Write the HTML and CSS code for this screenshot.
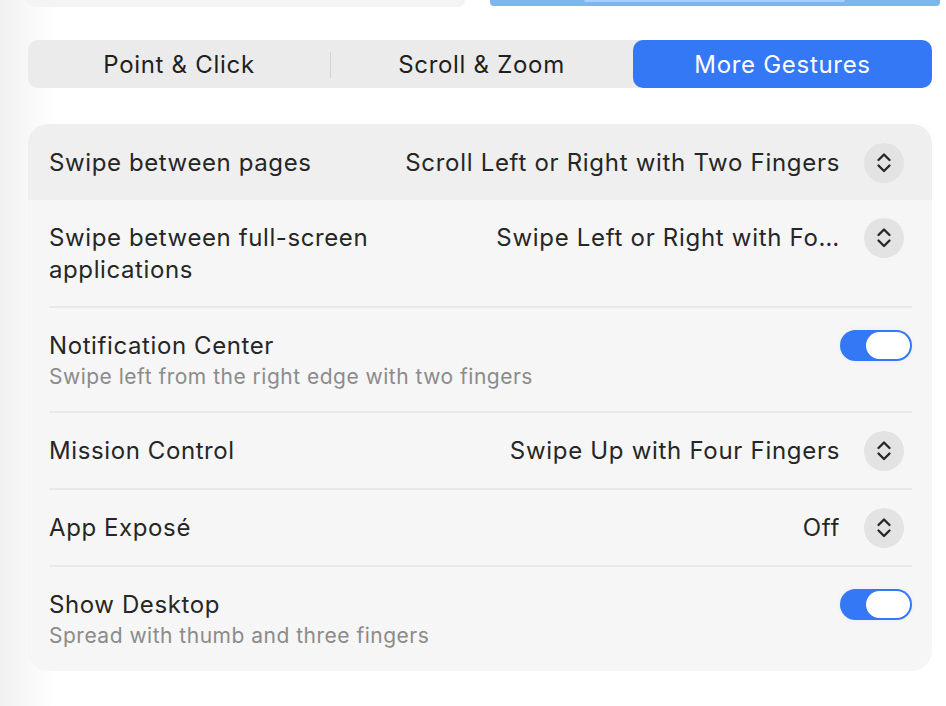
FILE: index.html
```html
<!DOCTYPE html>
<html lang="en">
<head>
<meta charset="utf-8">
<title>Trackpad – More Gestures</title>
<link rel="stylesheet" href="styles.css">
</head>
<body>
<div class="top-strip">
  <div class="top-card"></div>
  <div class="top-preview"><div class="top-preview-bar"></div></div>
</div>

<div class="segmented">
  <div class="segment">Point &amp; Click</div>
  <div class="segment divided">Scroll &amp; Zoom</div>
  <div class="segment selected">More Gestures</div>
</div>

<div class="card">
  <div class="row highlight">
    <div class="row-body first">
      <div class="label"><div class="title">Swipe between pages</div></div>
      <div class="control">
        <span class="value">Scroll Left or Right with Two Fingers</span>
        <span class="popup"><svg viewBox="0 0 40 40" width="40" height="40"><path d="M14.5 17 L20 11.5 L25.5 17 M14.5 22.5 L20 28 L25.5 22.5" fill="none" stroke="#262626" stroke-width="2.3" stroke-linecap="round" stroke-linejoin="round"/></svg></span>
      </div>
    </div>
  </div>
  <div class="row">
    <div class="row-body second">
      <div class="label"><div class="title">Swipe between full-screen<br>applications</div></div>
      <div class="control">
        <span class="value">Swipe Left or Right with Fo…</span>
        <span class="popup"><svg viewBox="0 0 40 40" width="40" height="40"><path d="M14.5 17 L20 11.5 L25.5 17 M14.5 22.5 L20 28 L25.5 22.5" fill="none" stroke="#262626" stroke-width="2.3" stroke-linecap="round" stroke-linejoin="round"/></svg></span>
      </div>
    </div>
  </div>
  <div class="row">
    <div class="row-body">
      <div class="label">
        <div class="title">Notification Center</div>
        <div class="subtitle">Swipe left from the right edge with two fingers</div>
      </div>
      <div class="control">
        <span class="toggle"><span class="knob"></span></span>
      </div>
    </div>
  </div>
  <div class="row">
    <div class="row-body">
      <div class="label"><div class="title">Mission Control</div></div>
      <div class="control">
        <span class="value">Swipe Up with Four Fingers</span>
        <span class="popup"><svg viewBox="0 0 40 40" width="40" height="40"><path d="M14.5 17 L20 11.5 L25.5 17 M14.5 22.5 L20 28 L25.5 22.5" fill="none" stroke="#262626" stroke-width="2.3" stroke-linecap="round" stroke-linejoin="round"/></svg></span>
      </div>
    </div>
  </div>
  <div class="row">
    <div class="row-body">
      <div class="label"><div class="title">App Exposé</div></div>
      <div class="control">
        <span class="value">Off</span>
        <span class="popup"><svg viewBox="0 0 40 40" width="40" height="40"><path d="M14.5 17 L20 11.5 L25.5 17 M14.5 22.5 L20 28 L25.5 22.5" fill="none" stroke="#262626" stroke-width="2.3" stroke-linecap="round" stroke-linejoin="round"/></svg></span>
      </div>
    </div>
  </div>
  <div class="row">
    <div class="row-body last">
      <div class="label">
        <div class="title">Show Desktop</div>
        <div class="subtitle">Spread with thumb and three fingers</div>
      </div>
      <div class="control">
        <span class="toggle"><span class="knob"></span></span>
      </div>
    </div>
  </div>
</div>
</body>
</html>
```

FILE: styles.css
```css
* { box-sizing: border-box; }

html, body {
  margin: 0;
  height: 100%;
}

body {
  width: 946px;
  height: 706px;
  overflow: hidden;
  font-family: Inter, "Noto Sans", "Liberation Sans", sans-serif;
  color: #262626;
  background: linear-gradient(90deg, #f1f1f1 0px, #f5f5f5 16px, #fbfbfb 40px, #ffffff 58px);
}

.top-strip {
  display: flex;
  align-items: flex-start;
  gap: 25px;
  padding-left: 27px;
  height: 7px;
}

.top-card {
  width: 438px;
  height: 7px;
  background: #f4f4f4;
  border-radius: 0 0 18px 18px;
}

.top-preview {
  width: 450px;
  height: 6px;
  background: #7fb5ee;
  border-radius: 0 0 4px 4px;
  display: flex;
  justify-content: flex-start;
  padding-left: 94px;
}

.top-preview-bar {
  width: 261px;
  height: 2px;
  background: #abcff6;
  border-radius: 0 0 3px 3px;
}

.segmented {
  margin: 33px 14px 0 28px;
  height: 48px;
  display: grid;
  grid-template-columns: 302px 303px 1fr;
  background: #ebebeb;
  border-radius: 10px;
  font-size: 24px;
  letter-spacing: 0.7px;
}

.segment {
  display: flex;
  align-items: center;
  justify-content: center;
  color: #1f1f1f;
  position: relative;
  padding-top: 1px;
}

.segment.divided::before {
  content: "";
  position: absolute;
  left: 0;
  top: 12px;
  bottom: 10px;
  width: 1px;
  background: #d3d3d3;
}

.segment.selected {
  background: #3478f6;
  color: #ffffff;
  border-radius: 10px;
}

.card {
  margin: 36px 14px 0 28px;
  background: #f6f6f6;
  border-radius: 20px;
  overflow: hidden;
}

.row {
  padding: 0 20px 0 21px;
}

.row.highlight {
  background: #efefef;
}

.row-body {
  display: flex;
  align-items: flex-start;
  justify-content: space-between;
  border-top: 2px solid #e9e9e9;
  padding: 22px 0 21px;
}

.row-body.first {
  border-top: none;
  padding: 23px 0 21px;
}

.row-body.second {
  border-top: none;
  padding: 22px 0 20px;
}

.row-body.last {
  padding-bottom: 22px;
}

.label {
  display: flex;
  flex-direction: column;
}

.title {
  font-size: 24px;
  line-height: 32px;
  letter-spacing: 0.6px;
  color: #262626;
}

.subtitle {
  font-size: 21px;
  line-height: 26px;
  letter-spacing: 0.5px;
  margin-top: 2px;
  color: #8b8b8b;
}

.control {
  display: flex;
  align-items: center;
  height: 32px;
}

.value {
  font-size: 24px;
  line-height: 32px;
  letter-spacing: 0.7px;
  color: #262626;
}

.popup {
  width: 40px;
  height: 40px;
  border-radius: 50%;
  background: #e3e3e3;
  margin-left: 24px;
  margin-right: 8px;
  display: flex;
}

.toggle {
  width: 72px;
  height: 31px;
  margin-top: -2px;
  border-radius: 16px;
  background: #3478f6;
  display: flex;
  align-items: center;
  justify-content: flex-end;
  padding-right: 2px;
  box-shadow: 0 0 6px rgba(0, 0, 0, 0.04);
}

.knob {
  width: 44px;
  height: 27px;
  border-radius: 14px;
  background: #ffffff;
}
```
